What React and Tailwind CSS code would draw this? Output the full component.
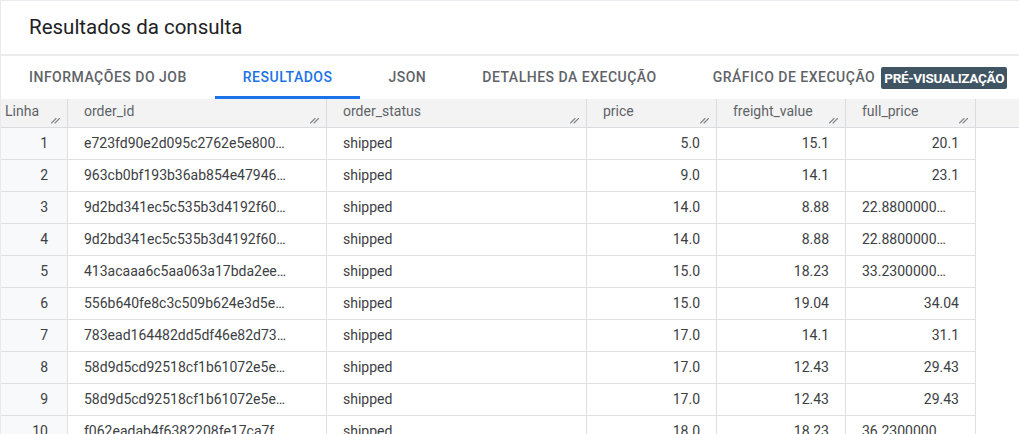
import React from 'react';

const tabs = ['INFORMAÇÕES DO JOB', 'RESULTADOS', 'JSON', 'DETALHES DA EXECUÇÃO', 'GRÁFICO DE EXECUÇÃO'];

const cols = [
  { key: 'order_id', label: 'order_id', w: 'w-[259px]' },
  { key: 'status', label: 'order_status', w: 'w-[260px]' },
  { key: 'price', label: 'price', w: 'w-[130px]' },
  { key: 'freight', label: 'freight_value', w: 'w-[129px]' },
  { key: 'full', label: 'full_price', w: 'w-[130px]' },
];

const rows = [
  ['e723fd90e2d095c2762e5e800…', 'shipped', '5.0', '15.1', '20.1'],
  ['963cb0bf193b36ab854e47946…', 'shipped', '9.0', '14.1', '23.1'],
  ['9d2bd341ec5c535b3d4192f60…', 'shipped', '14.0', '8.88', '22.8800000…'],
  ['9d2bd341ec5c535b3d4192f60…', 'shipped', '14.0', '8.88', '22.8800000…'],
  ['413acaaa6c5aa063a17bda2ee…', 'shipped', '15.0', '18.23', '33.2300000…'],
  ['556b640fe8c3c509b624e3d5e…', 'shipped', '15.0', '19.04', '34.04'],
  ['783ead164482dd5df46e82d73…', 'shipped', '17.0', '14.1', '31.1'],
  ['58d9d5cd92518cf1b61072e5e…', 'shipped', '17.0', '12.43', '29.43'],
  ['58d9d5cd92518cf1b61072e5e…', 'shipped', '17.0', '12.43', '29.43'],
  ['f062eadab4f6382208fe17ca7f…', 'shipped', '18.0', '18.23', '36.2300000…'],
];

const Grip = () => (
  <svg width="11" height="11" viewBox="0 0 11 11" className="absolute right-[6px] bottom-[3px]">
    <path d="M1.5 10 L6 5.5 M5 10 L9.5 5.5" stroke="#80868b" strokeWidth="1.1" strokeLinecap="round" />
  </svg>
);

const App = () => {
  return (
    <div className="w-[1019px] h-[434px] overflow-hidden bg-white border-l border-t border-[#e8eaed] font-['Roboto',sans-serif]">
      <div className="h-[55px] flex items-center pl-[28px] border-b-2 border-[#ececec]">
        <h1 className="text-[20.5px] text-[#202124] leading-none">Resultados da consulta</h1>
      </div>

      <div className="h-[43px] flex items-stretch">
        {tabs.map((t, i) => (
          <div
            key={t}
            className={`flex items-center px-[28px] text-[14px] font-medium tracking-[0.5px] ${
              i === 1 ? 'text-[#1a73e8] border-b-[3px] border-[#1a73e8] pt-[3px]' : 'text-[#5f6368]'
            } ${i === 4 ? 'pr-[6px]' : ''}`}
          >
            {t}
          </div>
        ))}
        <div className="flex items-center pt-[1px]">
          <span className="bg-[#3f5563] text-white text-[13.5px] font-bold px-[3px] h-[22px] flex items-center rounded-[2px] tracking-[-0.3px]">
            PRÉ-VISUALIZAÇÃO
          </span>
        </div>
      </div>

      <div className="flex h-[29px] bg-[#f3f3f3] border-b border-[#dadce0] text-[14px] text-[#5f6368]">
        <div className="relative w-[67px] shrink-0 border-r border-[#dadce0] pl-[4px] pt-[2px]">
          Linha
          <Grip />
        </div>
        {cols.map((c) => (
          <div key={c.key} className={`relative ${c.w} shrink-0 border-r border-[#dadce0] pl-[16px] pt-[2px]`}>
            {c.label}
            <Grip />
          </div>
        ))}
        <div className="flex-1" />
      </div>

      {rows.map((r, i) => (
        <div key={i} className="flex h-[32px] text-[14px] text-[#3c4043]">
          <div className="w-[67px] shrink-0 bg-[#f8f9fa] border-r border-b border-[#e0e0e0] flex items-center justify-end pr-[19px]">
            {i + 1}
          </div>
          {r.map((v, j) => {
            const right = j >= 2 && !(j === 4 && v.endsWith('…'));
            return (
              <div
                key={j}
                className={`${cols[j].w} shrink-0 border-r border-b border-[#e0e0e0] flex items-center px-[16px] ${
                  right ? 'justify-end' : 'justify-start'
                } whitespace-nowrap overflow-hidden`}
              >
                {v}
              </div>
            );
          })}
        </div>
      ))}
    </div>
  );
};

export default App;
